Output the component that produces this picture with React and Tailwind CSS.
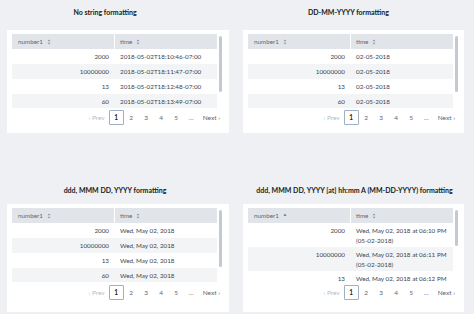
const font = { fontFamily: "Lato, 'Open Sans', sans-serif" };

const panels = [
  {
    title: "No string formatting",
    titleCls: "pr-[26px]",
    rows: [
      ["2000", "2018-05-02T18:10:46-07:00"],
      ["10000000", "2018-05-02T18:11:47-07:00"],
      ["13", "2018-05-02T18:12:48-07:00"],
      ["60", "2018-05-02T18:13:49-07:00"],
    ],
    thumb: "mt-[2px] h-[56px]",
  },
  {
    title: "DD-MM-YYYY formatting",
    titleCls: "pr-[10px]",
    rows: [
      ["2000", "02-05-2018"],
      ["10000000", "02-05-2018"],
      ["13", "02-05-2018"],
      ["60", "02-05-2018"],
    ],
    thumb: "mt-[2px] h-[56px]",
  },
  {
    title: "ddd, MMM DD, YYYY formatting",
    titleCls: "pr-[6px]",
    rows: [
      ["2000", "Wed, May 02, 2018"],
      ["10000000", "Wed, May 02, 2018"],
      ["13", "Wed, May 02, 2018"],
      ["60", "Wed, May 02, 2018"],
    ],
    thumb: "mt-[2px] h-[57px]",
  },
  {
    title: "ddd, MMM DD, YYYY [at] hh:mm A (MM-DD-YYYY) formatting",
    titleCls: "pl-[2px]",
    sorted: true,
    tall: true,
    // only what is in view; the third row is cut by the scroll area
    rows: [
      ["2000", "Wed, May 02, 2018 at 06:10 PM", "(05-02-2018)"],
      ["10000000", "Wed, May 02, 2018 at 06:11 PM", "(05-02-2018)"],
      ["13", "Wed, May 02, 2018 at 06:12 PM"],
    ],
    thumb: "mt-[2px] h-[36px]",
  },
];

function SortBoth() {
  return (
    <svg width="4" height="6" viewBox="0 0 4 6" className="ml-[4px]">
      <path d="M2 0.5 L3.5 2.2 H0.5 Z M2 5.5 L3.5 3.8 H0.5 Z" fill="#8a96a3" />
    </svg>
  );
}

function SortUp() {
  return (
    <svg width="4" height="4" viewBox="0 0 4 4" className="ml-[4px] mb-[1px]">
      <path d="M2 0.8 L3.6 2.8 H0.4 Z" fill="#5c6773" />
    </svg>
  );
}

function Table({ p }) {
  return (
    <div className="flex">
      <div className="w-[205px] h-[74px] overflow-hidden text-[6.3px] text-[#3c444d]">
        <div className="flex h-[15px] bg-[#e1e5ea] text-[#5c6773]">
          <div className="w-[103px] flex items-center pl-[6px] border-r border-white">
            number1
            {p.sorted ? <SortUp /> : <SortBoth />}
          </div>
          <div className="flex-1 flex items-center pl-[5px]">
            time
            <SortBoth />
          </div>
        </div>
        {p.rows.map((r, i) => (
          <div
            key={i}
            className={`flex ${p.tall ? "h-[24px] pt-[3px]" : "h-[15px] items-center"} ${i % 2 ? "bg-[#f2f4f6]" : "bg-white"}`}
          >
            <div className="w-[103px] text-right pr-[6px] leading-[9px]">{r[0]}</div>
            <div className="flex-1 pl-[5px] leading-[10px] whitespace-nowrap">
              <div>{r[1]}</div>
              {r[2] && <div>{r[2]}</div>}
            </div>
          </div>
        ))}
      </div>
      <div className="ml-[2px] w-[3px]">
        <div className={`w-[3px] rounded-full bg-[#c3c9d0] ${p.thumb}`} />
      </div>
    </div>
  );
}

function Pager() {
  return (
    <div className="flex items-center justify-end pr-[9px] h-[15px] text-[6.5px] text-[#5c6773]">
      <span className="text-[#b5bdc6] mr-[4px]">‹ Prev</span>
      <span className="w-[15px] h-[15px] flex items-center justify-center border border-[#9fb0c2] rounded-[1px] font-bold text-[#171d21]">
        1
      </span>
      {["2", "3", "4", "5", "…"].map((t) => (
        <span key={t} className="w-[15px] text-center">
          {t}
        </span>
      ))}
      <span className="ml-[4px]">Next ›</span>
    </div>
  );
}

function Cell({ p, top }) {
  return (
    <div className="flex flex-col">
      <div
        className={`text-[7px] font-bold text-[#171d21] text-center h-[10px] leading-[10px] whitespace-nowrap ${p.titleCls} ${top ? "mb-[13px]" : "mb-[9px]"}`}
      >
        {p.title}
      </div>
      <div className={`bg-white pt-[4px] pl-[5px] ${top ? "h-[103px]" : "h-[108px]"}`}>
        <Table p={p} />
        <div className={top ? "mt-[2px]" : "mt-[3px]"}>
          <Pager />
        </div>
      </div>
    </div>
  );
}

export default function App() {
  return (
    <div className="w-[474px] h-[314px] overflow-hidden bg-[#eef0f3]" style={font}>
      <div className="flex gap-[14px] pl-[7px] pt-[7px]">
        <div className="w-[222px]"><Cell p={panels[0]} top /></div>
        <div className="w-[221px]"><Cell p={panels[1]} top /></div>
      </div>
      <div className="flex gap-[14px] pl-[7px] mt-[52px]">
        <div className="w-[222px]"><Cell p={panels[2]} /></div>
        <div className="w-[221px]"><Cell p={panels[3]} /></div>
      </div>
    </div>
  );
}
